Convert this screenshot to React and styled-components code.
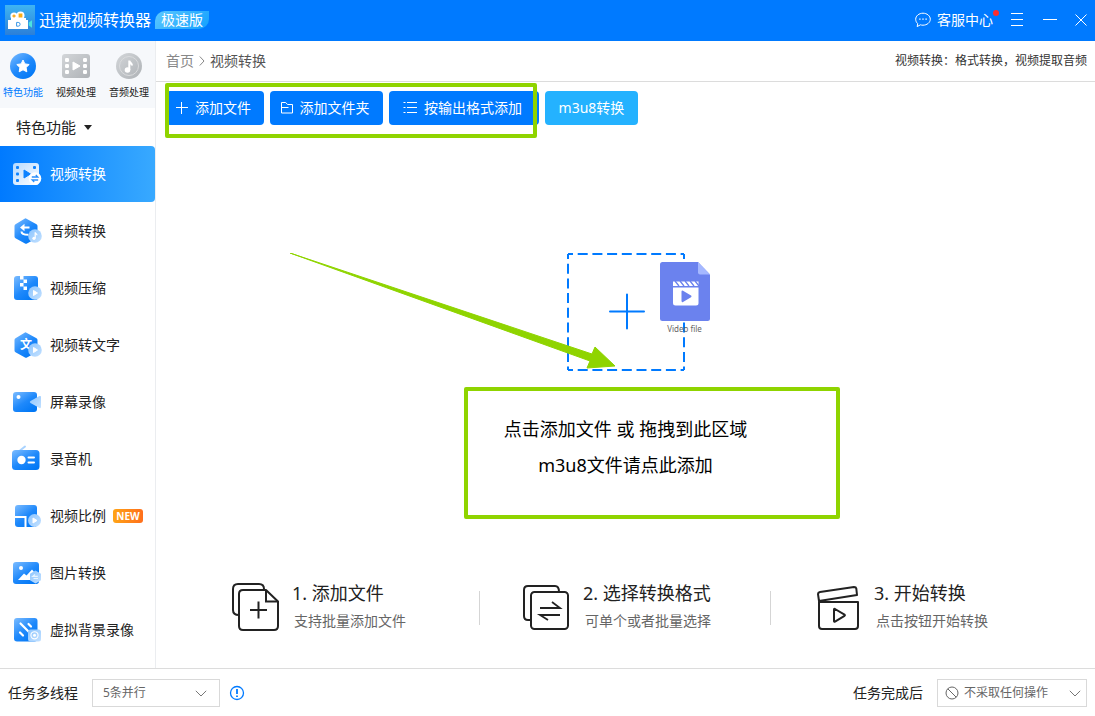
import React, { useState } from "react";
import styled, { createGlobalStyle, css } from "styled-components";

const GlobalStyle = createGlobalStyle`
	* {
		box-sizing: border-box;
	}

	body {
		margin: 0;
		background: #fff;
		color: #222;
		font-family: "Noto Sans", "Noto Sans CJK SC", sans-serif;
		font-size: 14px;
		line-height: 20px;
	}

	button,
	select {
		font: inherit;
		color: inherit;
		border: none;
		padding: 0;
		margin: 0;
		background: none;
		cursor: pointer;
	}

	a {
		color: inherit;
		text-decoration: none;
	}

	svg {
		display: block;
		flex-shrink: 0;
	}
`;

/* ---------- icons ---------- */

const Gradients = () => (
	<HiddenSvg width="0" height="0" aria-hidden="true">
		<defs>
			<linearGradient id="blue" x1="0" y1="0" x2="0.8" y2="1">
				<stop offset="0" stopColor="#7cbcff" />
				<stop offset="0.55" stopColor="#1f89fb" />
				<stop offset="1" stopColor="#0077f5" />
			</linearGradient>
			<linearGradient id="pale" x1="0" y1="0" x2="1" y2="1">
				<stop offset="0" stopColor="#8cc5ff" />
				<stop offset="1" stopColor="#c4e1ff" />
			</linearGradient>
			<linearGradient id="white" x1="0" y1="0" x2="1" y2="1">
				<stop offset="0" stopColor="#b5d9ff" />
				<stop offset="1" stopColor="#ffffff" />
			</linearGradient>
			<linearGradient id="grey" x1="0" y1="0" x2="1" y2="1">
				<stop offset="0" stopColor="#d3d6d9" />
				<stop offset="1" stopColor="#aeb2b6" />
			</linearGradient>
			<linearGradient id="logo" x1="0" y1="0" x2="0" y2="1">
				<stop offset="0" stopColor="#3fb4f2" />
				<stop offset="1" stopColor="#2b7fd8" />
			</linearGradient>
		</defs>
	</HiddenSvg>
);

const LogoIcon = () => (
	<svg width="30" height="30" viewBox="0 0 30 30">
		<rect width="30" height="30" fill="url(#logo)" />
		<circle cx="9" cy="11" r="3.6" fill="#fff" />
		<circle cx="15.5" cy="10.5" r="4" fill="#fff" />
		<path d="M9 9.4v3.2M7.4 11h3.2" stroke="#f5a81c" strokeWidth="1.4" />
		<path d="M13.6 8.6h3.8v3.8h-3.8z" fill="#f9ad17" />
		<path d="M3 15h3v-2h15v2h2v9H3z" fill="#fff" />
		<path d="M11.6 17.4h1.6a1.9 1.9 0 0 1 0 3.8h-1.600z" fill="none" stroke="#3a97e6" />
		<path d="M27 15.2v7.6l-3.2-2.4v-2.8z" fill="#4be3e0" />
	</svg>
);

const ChatIcon = () => (
	<svg width="16" height="16" viewBox="0 0 16 16" fill="none" stroke="#fff" strokeWidth="1">
		<path d="M8 1.2c4 0 7.3 2.7 7.3 6s-3.3 6-7.3 6c-.9 0-1.8-.1-2.6-.4L2.2 14.6l.5-3C1.4 10.500.7 9 .7 7.2c0-3.3 3.3-6 7.3-6z" />
		<path d="M4.2 7.2h1.4M7.3 7.2h1.4M10.4 7.2h1.4" strokeWidth="1.3" />
	</svg>
);

const MenuIcon = () => (
	<svg width="14" height="14" viewBox="0 0 14 14" stroke="#fff">
		<path d="M0 .5h12M0 6.5h12M0 12.5h12" />
	</svg>
);

const MinimizeIcon = () => (
	<svg width="14" height="12" viewBox="0 0 14 12" stroke="#fff">
		<path d="M0 5.5h14" />
	</svg>
);

const CloseIcon = () => (
	<svg width="12" height="12" viewBox="0 0 12 12" stroke="#fff">
		<path d="M.5.5l11 11M11.5.5l-11 11" />
	</svg>
);

const StarTabIcon = () => (
	<svg width="28" height="26" viewBox="0 0 28 26">
		<circle cx="14" cy="13" r="13" fill="url(#blue)" />
		<path
			d="M14 7l1.9 3.9 4.3.6-3.1 3 .7 4.3-3.8-2-3.8 2 .7-4.3-3.1-3 4.3-.6z"
			fill="#fff"
			stroke="#fff"
			strokeWidth="1"
			strokeLinejoin="round"
		/>
	</svg>
);

const FilmHoles = () => (
	<g fill="#fff">
		<rect x="3" y="4" width="4" height="4" rx="1.2" />
		<rect x="3" y="10" width="4" height="4" rx="1.2" />
		<rect x="3" y="16" width="4" height="4" rx="1.2" />
	</g>
);

const FilmTabIcon = () => (
	<svg width="28" height="26" viewBox="0 0 28 26">
		<rect y="1" width="28" height="24" rx="3" fill="url(#grey)" />
		<g transform="translate(0 1)">
			<FilmHoles />
			<g transform="translate(18 0)">
				<FilmHoles />
			</g>
		</g>
		<path d="M11 9l7 4-7 4z" fill="#fff" stroke="#fff" strokeLinejoin="round" />
	</svg>
);

const MusicTabIcon = () => (
	<svg width="28" height="26" viewBox="0 0 28 26">
		<circle cx="14" cy="13" r="13" fill="url(#grey)" />
		<circle cx="14" cy="13" r="9.5" fill="none" stroke="#d9dbdd" />
		<circle cx="12.500" cy="17" r="2.8" fill="#fff" />
		<path d="M14.300 17V7.500c0 2 2.700 2.500 2.700 5" fill="none" stroke="#fff" strokeWidth="2" />
	</svg>
);

const ItemSvg = ({ children }) => (
	<svg width="32" height="32" viewBox="0 0 32 32">
		{children}
	</svg>
);

const PlayDisc = () => (
	<>
		<circle cx="24" cy="21" r="6.8" fill="url(#pale)" />
		<path d="M22.5 18.5l4 2.5-4 2.5z" fill="#fff" stroke="#fff" strokeLinejoin="round" />
	</>
);

const Hexagon = () => (
	<path
		d="M15 3.5l10.5 5.8q1 .6 1 1.7v10.5q0 1.1-1 1.7L16 28.5q-1 .5-2 0l-9.500-5.300q-1-.6-1-1.700V11q0-1.100 1-1.700L14 3.500q.5-.3 1 0z"
		fill="url(#blue)"
	/>
);

const ConvertVideoIcon = () => (
	<ItemSvg>
		<rect x="2" y="5" width="26" height="22" rx="3" fill="url(#white)" />
		<g fill="#0c82ff">
			<rect x="5" y="8" width="3" height="3" rx="1" />
			<rect x="5" y="14.5" width="3" height="3" rx="1" />
			<rect x="5" y="21" width="3" height="3" rx="1" />
			<rect x="22" y="8" width="3" height="3" rx="1" />
			<path d="M13 12l6.500 4-6.500 4z" stroke="#0c82ff" strokeLinejoin="round" />
		</g>
		<circle cx="24" cy="20.5" r="6.3" fill="#fff" />
		<path d="M20.8 19h6l-2-2M27.2 22h-6l2 2" fill="none" stroke="#2a8ffb" strokeWidth="1.300" />
	</ItemSvg>
);

const ConvertAudioIcon = () => (
	<ItemSvg>
		<Hexagon />
		<path d="M9 12.500l4.500-3.700v7.400z" fill="#fff" />
		<path d="M12 12.500h6.500M10.500 16.500c0 2.500 2.500 3.300 7 3.300" fill="none" stroke="#fff" strokeWidth="2" />
		<circle cx="24" cy="21" r="6.8" fill="url(#pale)" />
		<circle cx="23" cy="23.3" r="1.6" fill="#fff" />
		<path d="M24.200 23.300v-6c.2 1.300 1.800 1.600 1.800 3" fill="none" stroke="#fff" strokeWidth="1.200" />
	</ItemSvg>
);

const CompressIcon = () => (
	<ItemSvg>
		<rect x="3" y="4" width="24" height="24" rx="3" fill="url(#blue)" />
		<path d="M9 4h3.500v3.500H9zM12.500 7.500H16V11h-3.500zM9 11h3.500v3.500H9zM12.500 14.500H16V18h-3.500z" fill="#fff" />
		<PlayDisc />
	</ItemSvg>
);

const SpeechTextIcon = () => (
	<ItemSvg>
		<Hexagon />
		<text
			x="15"
			y="20"
			textAnchor="middle"
			fontSize="12"
			fontWeight="700"
			fill="#fff"
			fontFamily="'Noto Sans CJK SC', sans-serif"
		>
			文
		</text>
		<PlayDisc />
	</ItemSvg>
);

const ScreenIcon = () => (
	<ItemSvg>
		<rect x="2" y="6" width="24" height="20" rx="3" fill="url(#blue)" />
		<circle cx="7.5" cy="11" r="2" fill="#fff" />
		<path d="M19.500 15L28.500 10q1.500-.5 1.500 1v10q0 1.500-1.500 1L19.500 17q-1.500-1 0-2z" fill="url(#pale)" />
	</ItemSvg>
);

const RecorderIcon = () => (
	<ItemSvg>
		<path d="M9 7.5L14 3.5" stroke="#a9d3ff" strokeWidth="2" strokeLinecap="round" />
		<rect x="1" y="7" width="27.5" height="20" rx="3.5" fill="url(#blue)" />
		<circle cx="10.5" cy="17" r="4.2" fill="#fff" />
		<path d="M17.5 14.5h5.5M17.5 19.5h5.5" stroke="#fff" strokeWidth="2" strokeLinecap="round" />
	</ItemSvg>
);

const RatioIcon = () => (
	<ItemSvg>
		<rect x="4" y="5" width="22" height="22" rx="3" fill="url(#blue)" />
		<path d="M4 17h10.5v10.5" fill="none" stroke="#fff" strokeWidth="2" />
		<circle cx="23.5" cy="20.5" r="6.5" fill="url(#pale)" />
		<path d="M22 18l4 2.500-4 2.500z" fill="#fff" stroke="#fff" strokeLinejoin="round" />
	</ItemSvg>
);

const PictureIcon = () => (
	<ItemSvg>
		<rect x="2" y="5" width="26" height="22" rx="3" fill="url(#blue)" />
		<circle cx="10" cy="11" r="2" fill="#fff" />
		<path d="M7 23l6-6.500 2.500 2 5.500-6 5 6V23z" fill="#fff" />
		<path d="M24.500 13.500l5.500 3.200v6.600l-5.500 3.200-5.500-3.200v-6.600z" fill="url(#pale)" />
		<path d="M24 17.500l-2.200 1.800h5M27 21.500h-4.500" fill="none" stroke="#e8f4ff" strokeWidth="1.200" />
	</ItemSvg>
);

const BackdropIcon = () => (
	<ItemSvg>
		<rect x="3" y="4" width="23.5" height="23.5" rx="3" fill="url(#blue)" />
		<path d="M9.500 9.500l9 9M17.500 10l2.500 2.500M9 18.500l3 3" stroke="#fff" strokeWidth="2.200" strokeLinecap="round" />
		<rect x="17" y="15.5" width="13" height="12" rx="2.5" fill="url(#pale)" />
		<circle cx="23.5" cy="21.3" r="3.6" fill="none" stroke="#fff" strokeWidth="1.1" />
		<circle cx="23.5" cy="21.3" r="1.5" fill="#fff" />
	</ItemSvg>
);

const PlusIcon = () => (
	<svg width="12" height="12" viewBox="0 0 12 12" stroke="#fff">
		<path d="M0 5.5h12M5.5 0v12" />
	</svg>
);

const FolderIcon = () => (
	<svg width="12" height="12" viewBox="0 0 12 12" fill="none" stroke="#fff">
		<path d="M.5 11V.5h4.200l1.800 2h5V11zM.5 5.500h7" />
	</svg>
);

const ListIcon = () => (
	<svg width="14" height="12" viewBox="0 0 14 12" stroke="#fff">
		<path d="M4 .5h10M4 5.5h10M4 10.5h10M.5 .5h2M.5 5.5h2M.5 10.5h2" />
	</svg>
);

const ChevronRight = () => (
	<svg width="6" height="10" viewBox="0 0 6 10" fill="none" stroke="#888">
		<path d="M.8.5L5 5 .8 9.5" />
	</svg>
);

const DashedBox = () => (
	<svg width="118" height="118" viewBox="0 0 118 118" fill="none" stroke="#007aff" strokeWidth="2">
		<path d="M1 1h116M1 117h116M1 1v116M117 1v116" strokeDasharray="10 4.7" strokeDashoffset="5" />
		<path d="M43 58.5h34M60 41.5v34" strokeLinecap="round" />
	</svg>
);

const VideoFileIcon = () => (
	<svg width="50" height="59" viewBox="0 0 50 59">
		<path d="M2.500 0H38l12 12.500v44q0 2.500-2.500 2.500h-45Q0 59 0 56.500v-54Q0 0 2.500 0z" fill="#6b82ee" />
		<path d="M38 0v10.500q0 2 2 2h10z" fill="#a5b8ff" />
		<path d="M13 25.500h25.500V41q0 2.500-2.500 2.500H15.500Q13 43.500 13 41z" fill="#fff" />
		<path d="M13 19.500h25.500v4.500H13z" fill="#fff" />
		<path d="M15 19l4 5M20 19l4 5M25 19l4 5M30 19l4 5M35 19l4 5" stroke="#6b82ee" strokeWidth="1.300" />
		<path d="M22.500 29.500l8 4.800-8 4.800z" fill="#6b82ee" stroke="#6b82ee" strokeWidth="2" strokeLinejoin="round" />
	</svg>
);

const AddStepIcon = () => (
	<svg width="48" height="48" viewBox="0 0 48 48" fill="none" stroke="#222" strokeWidth="2">
		<path d="M7 32Q1 32 1 27V6Q1 1 6 1H27q5 0 5 5" />
		<path d="M34 7H11q-4 0-4 4v32q0 4 4 4h31q4 0 4-4V18.500z" strokeLinejoin="round" />
		<path d="M34 7v11.500h12M18 27h17M26.500 18.500v17" />
	</svg>
);

const FormatStepIcon = () => (
	<svg width="48" height="48" viewBox="0 0 48 48" fill="none" stroke="#222" strokeWidth="2">
		<path d="M8 37H5q-4 0-4-4V7Q1 3 5 3h27q4 0 4 6" />
		<rect x="8" y="9" width="37" height="37" rx="3.5" />
		<path d="M17 25h20l-8-6M37 32H17l8 5" strokeWidth="1.800" />
	</svg>
);

const StartStepIcon = () => (
	<svg width="48" height="48" viewBox="-2 0 48 48" fill="none" stroke="#222" strokeWidth="2" strokeLinejoin="round">
		<path d="M3 19V43q0 3 3 3h33q3 0 3-3V19z" />
		<path d="M3 18l-1-7q0-1.500 2-2l34-5q2 0 2.300 1.500L41 12z" />
		<path d="M18 26.500v11.500q0 1 1 .6l9.500-5.800q.8-.6 0-1.200L19 26q-1-.5-1 .5z" />
	</svg>
);

const ArrowMark = () => (
	<svg width="326" height="116" viewBox="0 0 326 116">
		<path d="M0 0L302 101l3-7 20 19-28 2 3-7z" fill="#8fd400" stroke="#8fd400" strokeWidth="1" strokeLinejoin="round" />
	</svg>
);

/* ---------- page ---------- */

const tabs = [
	{ label: "特色功能", icon: StarTabIcon },
	{ label: "视频处理", icon: FilmTabIcon },
	{ label: "音频处理", icon: MusicTabIcon },
];

const items = [
	{ label: "视频转换", icon: ConvertVideoIcon },
	{ label: "音频转换", icon: ConvertAudioIcon },
	{ label: "视频压缩", icon: CompressIcon },
	{ label: "视频转文字", icon: SpeechTextIcon },
	{ label: "屏幕录像", icon: ScreenIcon },
	{ label: "录音机", icon: RecorderIcon },
	{ label: "视频比例", icon: RatioIcon, isNew: true },
	{ label: "图片转换", icon: PictureIcon },
	{ label: "虚拟背景录像", icon: BackdropIcon },
];

const steps = [
	{ title: "1. 添加文件", text: "支持批量添加文件", icon: AddStepIcon },
	{ title: "2. 选择转换格式", text: "可单个或者批量选择", icon: FormatStepIcon },
	{ title: "3. 开始转换", text: "点击按钮开始转换", icon: StartStepIcon },
];

const App = () => {
	const [tab, setTab] = useState("特色功能");
	const [current, setCurrent] = useState("视频转换");

	return (
		<Window>
			<GlobalStyle />
			<Gradients />
			<TitleBar>
				<LogoIcon />
				<AppName>迅捷视频转换器</AppName>
				<Edition>极速版</Edition>
				<WindowControls>
					<SupportButton>
						<ChatIcon />
						客服中心
						<Dot />
					</SupportButton>
					<IconButton aria-label="菜单">
						<MenuIcon />
					</IconButton>
					<IconButton aria-label="最小化">
						<MinimizeIcon />
					</IconButton>
					<IconButton aria-label="关闭">
						<CloseIcon />
					</IconButton>
				</WindowControls>
			</TitleBar>

			<Body>
				<Sidebar>
					<Tabs>
						{tabs.map(({ label, icon: Icon }) => (
							<Tab key={label} $active={tab === label} onClick={() => setTab(label)}>
								<Icon />
								{label}
							</Tab>
						))}
					</Tabs>
					<GroupButton>
						特色功能
						<Caret />
					</GroupButton>
					<Nav>
						{items.map(({ label, icon: Icon, isNew }) => (
							<NavItem key={label} $active={current === label} onClick={() => setCurrent(label)}>
								<Icon />
								{label}
								{isNew && <NewBadge>NEW</NewBadge>}
							</NavItem>
						))}
					</Nav>
				</Sidebar>

				<Main>
					<Crumbs>
						<HomeLink href="#">首页</HomeLink>
						<ChevronRight />
						<span>视频转换</span>
						<Hint>视频转换：格式转换，视频提取音频</Hint>
					</Crumbs>

					<Toolbar>
						<ToolButton $width={98}>
							<PlusIcon />
							添加文件
						</ToolButton>
						<ToolButton $width={113}>
							<FolderIcon />
							添加文件夹
						</ToolButton>
						<ToolButton $width={150}>
							<ListIcon />
							按输出格式添加
						</ToolButton>
						<ToolButton $width={93} $light>
							m3u8转换
						</ToolButton>
						<ToolbarMark />
					</Toolbar>

					<DropZone>
						<DropContent>
							<AddButton aria-label="添加文件">
								<DashedBox />
								<FileBadge>
									<VideoFileIcon />
									<span>Video file</span>
								</FileBadge>
							</AddButton>
							<Prompt>
								<p>点击添加文件 或 拖拽到此区域</p>
								<a href="#">m3u8文件请点此添加</a>
							</Prompt>
							<ArrowLayer>
								<ArrowMark />
							</ArrowLayer>
							<PromptMark />
						</DropContent>
					</DropZone>

					<Steps>
						{steps.map(({ title, text, icon: Icon }) => (
							<Step key={title}>
								<Icon />
								<div>
									<StepTitle>{title}</StepTitle>
									<StepText>{text}</StepText>
								</div>
							</Step>
						))}
					</Steps>
				</Main>
			</Body>

			<Footer>
				<Field>
					<label htmlFor="threads">任务多线程</label>
					<SelectBox $width={128}>
						<Select id="threads" defaultValue="5">
							<option value="5">5条并行</option>
						</Select>
						<SelectArrow $right={12} width="12" height="7" viewBox="0 0 12 7">
							<path d="M.8.8L6 6 11.2.8" />
						</SelectArrow>
					</SelectBox>
					<IconButton aria-label="提示">
						<svg width="16" height="16" viewBox="0 0 16 16" fill="none" stroke="#007aff">
							<circle cx="8" cy="8" r="6.5" strokeWidth="1.3" />
							<path d="M8 4v5M8 10.5V12" strokeWidth="1.8" />
						</svg>
					</IconButton>
				</Field>
				<Field>
					<label htmlFor="after">任务完成后</label>
					<SelectBox $width={150}>
						<ForbidIcon width="14" height="14" viewBox="0 0 14 14" fill="none" stroke="#666">
							<circle cx="7" cy="7" r="6" />
							<path d="M2.8 2.8l8.4 8.4" />
						</ForbidIcon>
						<Select id="after" defaultValue="none" $withIcon>
							<option value="none">不采取任何操作</option>
						</Select>
						<SelectArrow $right={5} width="12" height="7" viewBox="0 0 12 7">
							<path d="M.8.8L6 6 11.2.8" />
						</SelectArrow>
					</SelectBox>
				</Field>
			</Footer>
		</Window>
	);
};

const HiddenSvg = styled.svg`
	position: absolute;
`;

const Window = styled.div`
	min-height: 100vh;
	display: flex;
	flex-direction: column;
`;

const TitleBar = styled.header`
	height: 41px;
	padding: 0 8px 2px 5px;
	display: flex;
	align-items: center;
	background: #007aff;
	color: #fff;
`;

const AppName = styled.h1`
	margin: 0 4px;
	font-size: 16px;
	font-weight: 400;
`;

const Edition = styled.span`
	height: 18px;
	padding: 0 6px;
	line-height: 18px;
	border-radius: 10px 0 10px 0;
	background: linear-gradient(135deg, #5cc8ff, #12a0ff);
`;

const WindowControls = styled.div`
	margin-left: auto;
	display: flex;
	align-items: center;
	gap: 18px;
`;

const SupportButton = styled.button`
	position: relative;
	display: flex;
	align-items: center;
	gap: 6px;
`;

const Dot = styled.i`
	position: absolute;
	top: 0;
	right: -6px;
	width: 6px;
	height: 6px;
	border-radius: 50%;
	background: #ff2d2d;
`;

const IconButton = styled.button`
	display: flex;
	align-items: center;
`;

const Body = styled.div`
	flex: 1;
	display: flex;
`;

const Sidebar = styled.aside`
	width: 156px;
	flex-shrink: 0;
	border-right: 1px solid #ebedf0;
`;

const Tabs = styled.div`
	height: 67px;
	padding: 12px 6px 0 3px;
	display: flex;
	justify-content: space-between;
	align-items: flex-start;
	background: #f6f8fb;
`;

const Tab = styled.button`
	display: flex;
	flex-direction: column;
	align-items: center;
	gap: 6px;
	font-size: 10px;
	line-height: 14px;
	color: ${(props) => (props.$active ? "#007aff" : "#222")};
`;

const GroupButton = styled.button`
	height: 38px;
	padding: 0 16px;
	display: flex;
	align-items: center;
	gap: 8px;
	font-size: 15px;
`;

const Caret = styled.i`
	border: 4px solid transparent;
	border-top: 5px solid #222;
	border-bottom: 0;
`;

const Nav = styled.nav`
	display: flex;
	flex-direction: column;
	gap: 1px;
`;

const NavItem = styled.button`
	height: 56px;
	padding-left: 11px;
	display: flex;
	align-items: center;
	gap: 7px;
	border-radius: 0 4px 4px 0;

	${(props) =>
		props.$active &&
		css`
			background: linear-gradient(90deg, #007aff, #38a9ff);
			color: #fff;
		`}
`;

const NewBadge = styled.span`
	width: 30px;
	border-radius: 3px;
	background: linear-gradient(90deg, #ffa416, #ff6f1c);
	color: #fff;
	font-size: 10px;
	font-weight: 700;
	line-height: 14px;
	text-align: center;
`;

const Main = styled.main`
	flex: 1;
	min-width: 0;
	display: flex;
	flex-direction: column;
`;

const Crumbs = styled.div`
	height: 41px;
	padding: 0 8px 0 10px;
	display: flex;
	align-items: center;
	gap: 5px;
	border-bottom: 1px solid #dcdcdc;
	color: #555;
`;

const HomeLink = styled.a`
	color: #888;
`;

const Hint = styled.span`
	margin-left: auto;
	font-size: 12px;
	color: #333;
`;

const Toolbar = styled.div`
	position: relative;
	padding: 9px 10px 0;
	display: flex;
	gap: 6px;
`;

const ToolButton = styled.button`
	width: ${(props) => props.$width}px;
	height: 34px;
	padding-right: ${(props) => (props.$light ? 0 : 3)}px;
	display: flex;
	align-items: center;
	justify-content: center;
	gap: 7px;
	border-radius: 4px;
	background: ${(props) => (props.$light ? "#24b2ff" : "#007aff")};
	color: #fff;
`;

const greenFrame = css`
	position: absolute;
	border: 4px solid #8fd400;
	border-radius: 2px;
	pointer-events: none;
`;

const ToolbarMark = styled.div`
	${greenFrame}
	top: 1px;
	left: 9px;
	width: 372px;
	height: 55px;
`;

const DropZone = styled.section`
	flex: 1;
	padding-top: 27px;
	display: flex;
	align-items: center;
	justify-content: center;
`;

const DropContent = styled.div`
	position: relative;
	width: 441px;
	display: flex;
	flex-direction: column;
	align-items: center;
	gap: 40px;
`;

const AddButton = styled.button`
	position: relative;
`;

const FileBadge = styled.span`
	position: absolute;
	top: 9px;
	left: 93px;
	display: flex;
	flex-direction: column;
	align-items: center;
	font-size: 8px;
	line-height: 16px;
	color: #666;
`;

const Prompt = styled.div`
	font-size: 18px;
	line-height: 36px;
	text-align: center;
	color: #000;

	p {
		margin: 0;
	}
`;

const ArrowLayer = styled.div`
	position: absolute;
	top: 0;
	left: -115px;
	pointer-events: none;
`;

const PromptMark = styled.div`
	${greenFrame}
	top: 134px;
	left: 59px;
	width: 376px;
	height: 132px;
`;

const Steps = styled.ol`
	width: 100%;
	max-width: 873px;
	margin: 0 auto;
	padding: 0 0 37px;
	display: grid;
	grid-template-columns: repeat(3, 1fr);
	list-style: none;
`;

const Step = styled.li`
	position: relative;
	padding-left: 43px;
	display: flex;
	align-items: center;
	gap: 12px;

	&:not(:last-child)::after {
		content: "";
		position: absolute;
		right: 0;
		top: 8px;
		width: 1px;
		height: 34px;
		background: #d5d5d5;
	}
`;

const StepTitle = styled.h2`
	margin: 0 0 8px;
	font-size: 18px;
	font-weight: 400;
	line-height: 20px;
`;

const StepText = styled.p`
	margin: 0;
	padding-left: 2px;
	color: #666;
`;

const Footer = styled.footer`
	height: 48px;
	padding: 0 8px;
	display: flex;
	align-items: center;
	justify-content: space-between;
	border-top: 1px solid #dcdcdc;
`;

const Field = styled.div`
	display: flex;
	align-items: center;

	label {
		margin-right: 14px;
	}

	${IconButton} {
		margin-left: 9px;
	}
`;

const SelectBox = styled.div`
	position: relative;
	width: ${(props) => props.$width}px;
	height: 28px;
	border: 1px solid #d9d9d9;
`;

const Select = styled.select`
	appearance: none;
	width: 100%;
	height: 100%;
	padding-left: ${(props) => (props.$withIcon ? 26 : 10)}px;
	font-size: 12px;
	color: #666;
`;

const SelectArrow = styled.svg`
	position: absolute;
	top: 10px;
	right: ${(props) => props.$right}px;
	fill: none;
	stroke: #777;
	pointer-events: none;
`;

const ForbidIcon = styled.svg`
	position: absolute;
	top: 6px;
	left: 7px;
	pointer-events: none;
`;

export default App;
